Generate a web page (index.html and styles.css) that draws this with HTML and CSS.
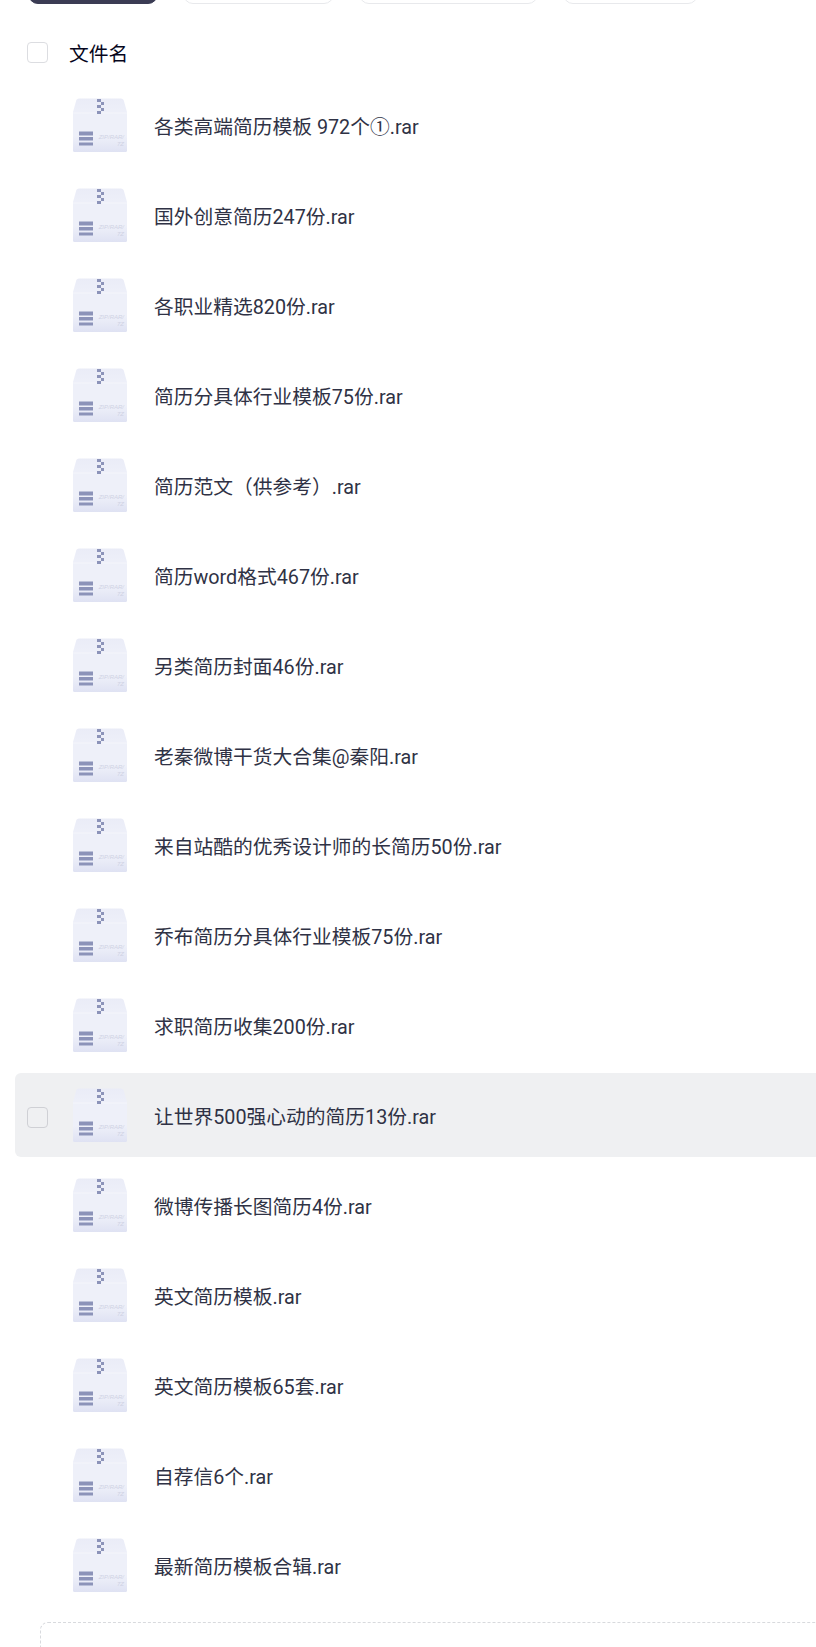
FILE: index.html
```html
<!DOCTYPE html>
<html lang="zh-CN">
<head>
  <meta charset="UTF-8" />
  <title>文件列表</title>
  <link rel="stylesheet" href="styles.css">
</head>
<body>
  <svg class="defs" width="0" height="0" aria-hidden="true">
    <defs>
      <linearGradient id="boxFill" x1="0" y1="0" x2="0" y2="1">
        <stop offset="0" stop-color="#eaecf7" />
        <stop offset="0.3" stop-color="#eef0f9" />
        <stop offset="0.7" stop-color="#eef0f9" />
        <stop offset="1" stop-color="#dfe2f3" />
      </linearGradient>
      <symbol id="rarIcon" viewBox="0 0 54 54">
        <path d="M6 0.5H48Q50 0.5 50.600 2L54 14V52.500Q54 54 52.500 54H1.500Q0 54 0 52.500V14L3.400 2Q4 0.500 6 0.500Z" fill="url(#boxFill)" />
        <path d="M0 15H54" stroke="#f4f5fb" stroke-width="1" />
        <path d="M24 1h4v3h-4zM28 4h3v3h-3zM24 7h4v3h-4zM28 10h3v3h-3zM24 13h4v3h-4z" fill="#8c93b9" />
        <path d="M6 33.500h14v4H6zM6 39h14v3.500H6zM6 44.500h14v3H6z" fill="#8c93b9" />
        <text x="51" y="41" class="icon-label">ZIP/RAR/</text>
        <text x="51" y="47.500" class="icon-label">7Z</text>
      </symbol>
    </defs>
  </svg>

  <div class="tabs">
    <div class="tab tab-active"></div>
    <div class="tab tab-two"></div>
    <div class="tab tab-three"></div>
    <div class="tab tab-four"></div>
  </div>

  <div class="list-head">
    <span class="checkbox"></span>
    <span class="head-name">文件名</span>
  </div>

  <ul class="files">
    <li class="file"><span class="checkbox"></span><svg class="file-icon"><use href="#rarIcon" /></svg><span class="file-name">各类高端简历模板 972个①.rar</span></li>
    <li class="file"><span class="checkbox"></span><svg class="file-icon"><use href="#rarIcon" /></svg><span class="file-name">国外创意简历247份.rar</span></li>
    <li class="file"><span class="checkbox"></span><svg class="file-icon"><use href="#rarIcon" /></svg><span class="file-name">各职业精选820份.rar</span></li>
    <li class="file"><span class="checkbox"></span><svg class="file-icon"><use href="#rarIcon" /></svg><span class="file-name">简历分具体行业模板75份.rar</span></li>
    <li class="file"><span class="checkbox"></span><svg class="file-icon"><use href="#rarIcon" /></svg><span class="file-name">简历范文（供参考）.rar</span></li>
    <li class="file"><span class="checkbox"></span><svg class="file-icon"><use href="#rarIcon" /></svg><span class="file-name">简历word格式467份.rar</span></li>
    <li class="file"><span class="checkbox"></span><svg class="file-icon"><use href="#rarIcon" /></svg><span class="file-name">另类简历封面46份.rar</span></li>
    <li class="file"><span class="checkbox"></span><svg class="file-icon"><use href="#rarIcon" /></svg><span class="file-name">老秦微博干货大合集@秦阳.rar</span></li>
    <li class="file"><span class="checkbox"></span><svg class="file-icon"><use href="#rarIcon" /></svg><span class="file-name">来自站酷的优秀设计师的长简历50份.rar</span></li>
    <li class="file"><span class="checkbox"></span><svg class="file-icon"><use href="#rarIcon" /></svg><span class="file-name">乔布简历分具体行业模板75份.rar</span></li>
    <li class="file"><span class="checkbox"></span><svg class="file-icon"><use href="#rarIcon" /></svg><span class="file-name">求职简历收集200份.rar</span></li>
    <li class="file file-hover"><span class="checkbox"></span><svg class="file-icon"><use href="#rarIcon" /></svg><span class="file-name">让世界500强心动的简历13份.rar</span></li>
    <li class="file"><span class="checkbox"></span><svg class="file-icon"><use href="#rarIcon" /></svg><span class="file-name">微博传播长图简历4份.rar</span></li>
    <li class="file"><span class="checkbox"></span><svg class="file-icon"><use href="#rarIcon" /></svg><span class="file-name">英文简历模板.rar</span></li>
    <li class="file"><span class="checkbox"></span><svg class="file-icon"><use href="#rarIcon" /></svg><span class="file-name">英文简历模板65套.rar</span></li>
    <li class="file"><span class="checkbox"></span><svg class="file-icon"><use href="#rarIcon" /></svg><span class="file-name">自荐信6个.rar</span></li>
    <li class="file"><span class="checkbox"></span><svg class="file-icon"><use href="#rarIcon" /></svg><span class="file-name">最新简历模板合辑.rar</span></li>
  </ul>

  <div class="drop-zone"></div>
</body>
</html>
```
FILE: styles.css
```css
html, body {
  height: 100%;
}

body {
  margin: 0;
  background: #fff;
  font-family: Roboto, "Noto Sans CJK SC", sans-serif;
  overflow: hidden;
}

.defs {
  position: absolute;
}

.icon-label {
  font-family: "Liberation Sans", sans-serif;
  font-size: 6px;
  font-style: italic;
  text-anchor: end;
  fill: #cfd2e4;
}

/* the tab bar is scrolled away, only its lower edge is left */
.tabs {
  display: flex;
  align-items: flex-end;
  height: 4px;
  padding-left: 28px;
  overflow: hidden;
}

.tab {
  flex: none;
  height: 36px;
  box-sizing: border-box;
  margin-right: 25px;
  border: 1px solid #e8e9ec;
  border-radius: 10px;
  background: #fff;
}

.tab-active {
  width: 130px;
  background: #3b3c54;
  border-color: #3b3c54;
}

.tab-two {
  width: 151px;
}

.tab-three {
  width: 179px;
}

.tab-four {
  width: 135px;
}

.list-head {
  display: flex;
  align-items: center;
  height: 96px;
  padding-left: 27px;
}

.checkbox {
  flex: none;
  width: 21px;
  height: 21px;
  box-sizing: border-box;
  border: 1px solid #dcdde1;
  border-radius: 4px;
}

.head-name {
  margin-left: 21px;
  font-size: 19.750px;
  color: #06061c;
}

.files {
  margin: -17px 0 0;
  padding: 0;
  list-style: none;
}

.file {
  display: flex;
  align-items: center;
  width: 830px;
  height: 84px;
  margin: 0 0 6px 15px;
  padding-left: 12px;
  border-radius: 6px;
}

.file .checkbox {
  visibility: hidden;
}

.file-hover {
  background: #eff0f2;
}

.file-hover .checkbox {
  visibility: visible;
  margin-top: 4px;
  border-color: #cfd0d5;
}

.file-icon {
  flex: none;
  width: 54px;
  height: 54px;
  margin-left: 25px;
}

.file-name {
  margin-left: 27px;
  font-size: 19.750px;
  color: #2f3245;
  white-space: nowrap;
}

.drop-zone {
  width: 830px;
  height: 120px;
  margin: 15px 0 0 40px;
  border: 1px dashed #d8dade;
  border-radius: 8px;
}
```
